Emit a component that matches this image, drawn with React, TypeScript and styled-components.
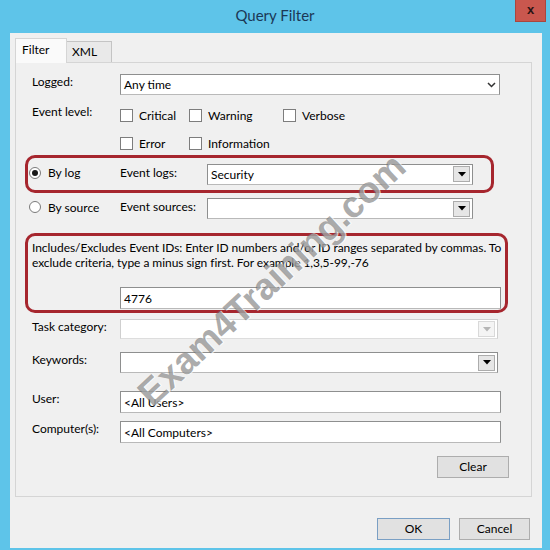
import React from "react"
import styled, { createGlobalStyle } from "styled-components"

const FONT = `"Lato", "Segoe UI", "Liberation Sans", sans-serif`

const GlobalStyle = createGlobalStyle`
  html, body {
    margin: 0;
    padding: 0;
    background: #ffffff;
  }
  * {
    box-sizing: border-box;
  }
  body {
    font-family: ${FONT};
    font-size: 12px;
    color: #000000;
  }
`

const Window = styled.div`
  position: relative;
  width: 550px;
  height: 550px;
  background: #5ec4e9;
  display: flex;
  flex-direction: column;
  overflow: hidden;
`

const TitleBar = styled.div`
  height: 33px;
  display: grid;
  grid-template-columns: 1fr auto 1fr;
`

const Title = styled.div`
  grid-column: 2;
  align-self: center;
  padding-bottom: 4px;
  font-size: 15px;
  color: #1b3856;
`

const CloseButton = styled.div`
  grid-column: 3;
  justify-self: end;
  align-self: start;
  width: 31px;
  height: 22px;
  margin-right: 4px;
  background: #c9574e;
  border: 1px solid #a9463f;
  border-top: none;
  display: flex;
  align-items: center;
  justify-content: center;
  font-family: "Liberation Sans", sans-serif;
  font-weight: bold;
  font-size: 13px;
  color: #2a1414;
  padding-bottom: 2px;
`

const Client = styled.div`
  flex: 1;
  margin: 0 8px 2px 10px;
  background: #f0f0f0;
  display: flex;
  flex-direction: column;
  padding: 5px 10px 8px 5px;
`

const TabStrip = styled.div`
  display: flex;
  align-items: flex-end;
  height: 24px;
  position: relative;
  z-index: 1;
`

const Tab = styled.div<{ $active?: boolean }>`
  height: ${(p) => (p.$active ? "25px" : "21px")};
  width: ${(p) => (p.$active ? "52px" : "45px")};
  padding: ${(p) => (p.$active ? "3px 0 0 6px" : "2px 0 0 5px")};
  background: ${(p) => (p.$active ? "#fafafa" : "#e9e9e9")};
  border: 1px solid ${(p) => (p.$active ? "#d5d5d5" : "#c4c4c4")};
  border-bottom: none;
  border-left: ${(p) => (p.$active ? "1px solid #d5d5d5" : "none")};
  align-self: flex-start;
  margin-top: ${(p) => (p.$active ? "0" : "3px")};
  font-size: 12px;
`

const Panel = styled.div`
  height: 435px;
  border: 1px solid #d5d5d5;
  background: #f0f0f0;
  display: flex;
  flex-direction: column;
  padding: 0 22px 0 16px;
`

const Row = styled.div<{ $top: number; $shift?: number }>`
  display: flex;
  align-items: flex-start;
  margin-top: ${(p) => p.$top}px;
  margin-left: ${(p) => p.$shift ?? 0}px;
`

const Label = styled.div<{ $width?: number }>`
  width: ${(p) => p.$width ?? 88}px;
  flex-shrink: 0;
  line-height: 16px;
`

const Field = styled.div<{ $width: number; $height?: number; $disabled?: boolean; $indent?: number }>`
  position: relative;
  width: ${(p) => p.$width}px;
  height: ${(p) => p.$height ?? 22}px;
  margin-left: ${(p) => p.$indent ?? 0}px;
  background: #ffffff;
  border: 1px solid ${(p) => (p.$disabled ? "#cfcfcf" : "#8e8f8f")};
  border-bottom-color: ${(p) => (p.$disabled ? "#dddddd" : "#b9b9b9")};
  display: flex;
  align-items: center;
  padding: 0 3px;
  font-size: 12px;
`

const FieldText = styled.span`
  flex: 1;
  white-space: nowrap;
`

const DropButton = styled.div<{ $disabled?: boolean }>`
  width: 17px;
  height: 16px;
  margin-right: -1px;
  background: ${(p) => (p.$disabled ? "#f4f4f4" : "#e6e6e6")};
  border: 1px solid ${(p) => (p.$disabled ? "#d9d9d9" : "#acacac")};
  display: flex;
  align-items: center;
  justify-content: center;
`

const CheckGrid = styled.div`
  display: grid;
  grid-template-columns: 69px 94px auto;
  grid-auto-rows: 22px;
  row-gap: 6px;
`

const CheckItem = styled.label`
  display: flex;
  align-items: center;
  gap: 6px;
  white-space: nowrap;
`

const CheckBox = styled.span`
  width: 13px;
  height: 13px;
  background: #ffffff;
  border: 1px solid #7d7d7d;
  flex-shrink: 0;
`

const Highlight = styled.div<{ $width: number }>`
  width: ${(p) => p.$width}px;
  margin-left: -7px;
  border: 3px solid #a6262e;
  border-radius: 10px;
`

const LogRow = styled.div<{ $plain?: boolean }>`
  display: flex;
  align-items: center;
  height: ${(p) => (p.$plain ? "21px" : "32px")};
  padding-left: 1px;
`

const RadioLabel = styled.label`
  width: 91px;
  display: flex;
  align-items: center;
  gap: 7px;
  white-space: nowrap;
  margin-top: -3px;
`

const Radio = styled.span<{ $checked?: boolean }>`
  width: 12px;
  height: 12px;
  border-radius: 50%;
  border: 1px solid #7a7a7a;
  background: #ffffff;
  display: flex;
  align-items: center;
  justify-content: center;
  &::after {
    content: "";
    display: ${(p) => (p.$checked ? "block" : "none")};
    width: 6px;
    height: 6px;
    border-radius: 50%;
    background: #1a1a1a;
  }
`

const SideLabel = styled(Label)`
  margin-top: -3px;
`

const IdBox = styled.div`
  padding: 4px 4px 1px 4px;
`

const Hint = styled.div`
  line-height: 15px;
  white-space: nowrap;
  letter-spacing: -0.05px;
  margin-bottom: 17px;
`

const ClearRow = styled.div`
  display: flex;
  justify-content: flex-end;
  margin-top: 13px;
`

const Button = styled.div<{ $width: number; $default?: boolean }>`
  width: ${(p) => p.$width}px;
  height: 22px;
  background: #e1e1e1;
  border: 1px solid ${(p) => (p.$default ? "#7a9fc4" : "#adadad")};
  display: flex;
  align-items: center;
  justify-content: center;
  font-size: 12px;
  padding-bottom: 1px;
`

const Footer = styled.div`
  display: flex;
  justify-content: flex-end;
  gap: 9px;
  margin-top: 21px;
  padding-right: 2px;
`

const Watermark = styled.div`
  position: absolute;
  left: 272px;
  top: 280px;
  transform: translate(-50%, -50%) rotate(-43deg);
  font-family: "Liberation Sans", Arial, sans-serif;
  font-weight: bold;
  font-size: 37px;
  color: rgba(100, 100, 100, 0.55);
  text-shadow: 1px 1px 0 rgba(255, 255, 255, 0.7);
  white-space: nowrap;
  pointer-events: none;
`

const Chevron = () => (
  <svg width="9" height="6" viewBox="0 0 9 6">
    <polyline points="1,1 4.5,4.5 8,1" fill="none" stroke="#333" strokeWidth="1.5" />
  </svg>
)

const Arrow = ({ color = "#000" }: { color?: string }) => (
  <svg width="8" height="5" viewBox="0 0 8 5">
    <polygon points="0,0 8,0 4,4.5" fill={color} />
  </svg>
)

const App = () => {
  const levels = ["Critical", "Warning", "Verbose", "Error", "Information"]

  return (
    <>
      <GlobalStyle />
      <Window>
        <TitleBar>
          <Title>Query Filter</Title>
          <CloseButton>x</CloseButton>
        </TitleBar>
        <Client>
          <TabStrip>
            <Tab $active>Filter</Tab>
            <Tab>XML</Tab>
          </TabStrip>
          <Panel>
            <Row $top={11}>
              <Label>Logged:</Label>
              <Field $width={380} $height={21}>
                <FieldText>Any time</FieldText>
                <Chevron />
              </Field>
            </Row>

            <Row $top={9}>
              <Label>Event level:</Label>
              <CheckGrid>
                {levels.map((l) => (
                  <CheckItem key={l}>
                    <CheckBox />
                    {l}
                  </CheckItem>
                ))}
              </CheckGrid>
            </Row>

            <Row $top={1}>
              <Highlight $width={469}>
                <LogRow>
                  <RadioLabel>
                    <Radio $checked />
                    By log
                  </RadioLabel>
                  <SideLabel $width={87}>Event logs:</SideLabel>
                  <Field $width={266} $height={21}>
                    <FieldText>Security</FieldText>
                    <DropButton>
                      <Arrow />
                    </DropButton>
                  </Field>
                </LogRow>
              </Highlight>
            </Row>

            <Row $top={5} $shift={-4}>
              <LogRow $plain>
                <RadioLabel>
                  <Radio />
                  By source
                </RadioLabel>
                <SideLabel $width={87}>Event sources:</SideLabel>
                <Field $width={266} $height={21}>
                  <FieldText />
                  <DropButton>
                    <Arrow />
                  </DropButton>
                </Field>
              </LogRow>
            </Row>

            <Row $top={14}>
              <Highlight $width={483}>
                <IdBox>
                  <Hint>
                    Includes/Excludes Event IDs: Enter ID numbers and/or ID ranges separated by commas. To
                    <br />
                    exclude criteria, type a minus sign first. For example 1,3,5-99,-76
                  </Hint>
                  <Field $width={381} $indent={88}>
                    <FieldText>4776</FieldText>
                  </Field>
                </IdBox>
              </Highlight>
            </Row>

            <Row $top={6}>
              <Label>Task category:</Label>
              <Field $width={378} $height={20} $disabled>
                <FieldText />
                <DropButton $disabled>
                  <Arrow color="#b5b5b5" />
                </DropButton>
              </Field>
            </Row>

            <Row $top={13}>
              <Label>Keywords:</Label>
              <Field $width={378} $height={21}>
                <FieldText />
                <DropButton>
                  <Arrow />
                </DropButton>
              </Field>
            </Row>

            <Row $top={18}>
              <Label>User:</Label>
              <Field $width={381}>
                <FieldText>&lt;All Users&gt;</FieldText>
              </Field>
            </Row>

            <Row $top={8}>
              <Label>Computer(s):</Label>
              <Field $width={381}>
                <FieldText>&lt;All Computers&gt;</FieldText>
              </Field>
            </Row>

            <ClearRow>
              <Button $width={72}>Clear</Button>
            </ClearRow>
          </Panel>

          <Footer>
            <Button $width={73} $default>
              OK
            </Button>
            <Button $width={71}>Cancel</Button>
          </Footer>
        </Client>
        <Watermark>Exam4Training.com</Watermark>
      </Window>
    </>
  )
}

export default App
